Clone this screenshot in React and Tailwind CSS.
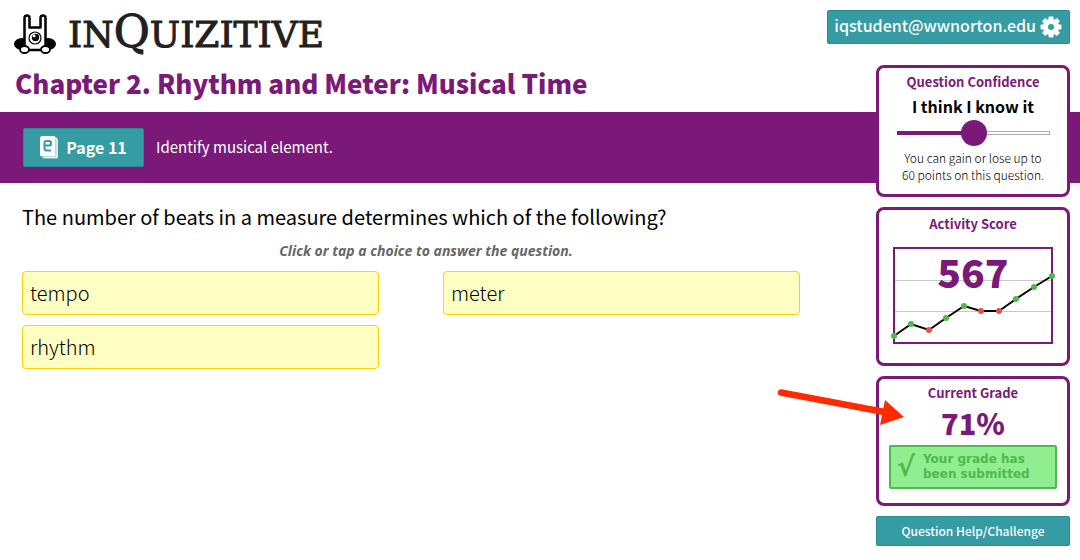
import { useState } from "react";

const choices = ["tempo", "meter", "rhythm"];

const scores = [
  { x: 8, y: 94, correct: true },
  { x: 25, y: 82, correct: true },
  { x: 43, y: 88, correct: false },
  { x: 60, y: 76, correct: true },
  { x: 78, y: 64, correct: true },
  { x: 95, y: 69, correct: false },
  { x: 113, y: 69, correct: false },
  { x: 130, y: 57, correct: true },
  { x: 148, y: 45, correct: true },
  { x: 166, y: 34, correct: true },
];

function RabbitLogo() {
  return (
    <svg width="42" height="40" viewBox="0 0 42 40" aria-hidden="true">
      <ellipse cx="8" cy="30" rx="8" ry="6" fill="#000" />
      <ellipse cx="34" cy="30" rx="8" ry="6" fill="#000" />
      <path
        d="M10.500 36V4q0-2.500 2.500-2.500t2.500 2.500v9.500h11V4q0-2.500 2.500-2.500t2.500 2.500V36z"
        fill="#fff"
        stroke="#000"
        strokeWidth="2.500"
        strokeLinejoin="round"
      />
      <circle cx="21" cy="24" r="6" fill="#fff" stroke="#000" strokeWidth="1.200" />
      <circle cx="21.500" cy="23.500" r="3.700" fill="#000" />
      <circle cx="20" cy="21.800" r="1.500" fill="#fff" />
      <ellipse cx="10.500" cy="35.500" rx="4.500" ry="3.500" fill="#fff" stroke="#000" strokeWidth="1.800" />
      <ellipse cx="31.500" cy="35.500" rx="4.500" ry="3.500" fill="#fff" stroke="#000" strokeWidth="1.800" />
    </svg>
  );
}

function GearIcon() {
  return (
    <svg width="22" height="22" viewBox="-11 -11 22 22" fill="#fff" aria-hidden="true">
      {[0, 45, 90, 135].map((angle) => (
        <rect key={angle} x="-2.500" y="-10.500" width="5" height="21" rx="1" transform={`rotate(${angle})`} />
      ))}
      <circle r="8" />
      <circle r="3" fill="#359ca3" />
    </svg>
  );
}

function EbookIcon() {
  return (
    <svg width="18" height="24" viewBox="0 0 18 24" aria-hidden="true">
      <path d="M2 1h14l2 2v19.500H3.500L1 20z" fill="#b5dcdf" />
      <path d="M14.500 1.500l2.500 2v18H4" fill="none" stroke="#fff" strokeWidth="0.800" />
      <path d="M1.500 0H15v20H0V1.500z" fill="#fff" />
      <path
        d="M4.500 9.500h5.500q1 0 1-1V7q0-2-2-2H6.500q-2 0-2 2v5.500q0 2 2 2H11"
        fill="none"
        stroke="#359ca3"
        strokeWidth="2"
      />
    </svg>
  );
}

function Card({ title, className, children }) {
  return (
    <section
      className={`relative rounded-lg border-3 border-[#7b1979] bg-white text-center ${className}`}
    >
      <h2 className="text-[13px] leading-5 font-bold text-[#7b1979]">{title}</h2>
      {children}
    </section>
  );
}

function ScoreChart() {
  return (
    <div className="relative mt-2">
      <svg viewBox="0 0 174 104" className="w-full" aria-hidden="true">
        <path d="M8 38.500h158M8 69.500h158" stroke="#c8c8c8" />
        <rect x="8" y="6" width="158" height="95" fill="none" stroke="#7b1979" strokeWidth="2" />
      </svg>
      <p className="absolute inset-x-0 top-0.5 text-[39px] leading-[54px] font-black text-[#7b1979]">567</p>
      <svg viewBox="0 0 174 104" className="absolute inset-0 w-full" aria-hidden="true">
        <polyline
          points={scores.map((s) => `${s.x},${s.y}`).join(" ")}
          fill="none"
          stroke="#000"
          strokeWidth="2"
        />
        {scores.map((s) => (
          <circle key={s.x} cx={s.x} cy={s.y} r="3" fill={s.correct ? "#4fb84f" : "#e0524b"} />
        ))}
      </svg>
    </div>
  );
}

function ConfidenceSlider() {
  const [value, setValue] = useState(51);

  return (
    <input
      type="range"
      aria-label="Question confidence"
      value={value}
      onChange={(e) => setValue(e.target.value)}
      style={{ "--fill": `${value}%` }}
      className="mx-auto block h-[26px] w-[153px] appearance-none bg-transparent [&::-webkit-slider-runnable-track]:h-1 [&::-webkit-slider-runnable-track]:bg-[linear-gradient(to_right,#7b1979_var(--fill),transparent_var(--fill)),linear-gradient(#fff,#fff)] [&::-webkit-slider-runnable-track]:bg-no-repeat [&::-webkit-slider-runnable-track]:[background-size:100%_100%,calc(100%-1px)_2px] [&::-webkit-slider-runnable-track]:[background-position:0_0,0_1px] [&::-webkit-slider-runnable-track]:bg-[#aaa] [&::-webkit-slider-thumb]:-mt-[11px] [&::-webkit-slider-thumb]:size-[26px] [&::-webkit-slider-thumb]:appearance-none [&::-webkit-slider-thumb]:rounded-full [&::-webkit-slider-thumb]:bg-[#7b1979]"
    />
  );
}

function Sidebar() {
  return (
    <aside className="z-10 col-start-2 row-start-2 row-span-3 mr-2.5 flex flex-col gap-2.5">
      <Card title="Question Confidence" className="h-[132px] pt-1">
        <p className="text-base leading-7 font-bold text-black">I think I know it</p>
        <ConfidenceSlider />
        <p className="mt-[3px] text-xs leading-[17px] font-light text-black">
          You can gain or lose up to
          <br />
          60 points on this question.
        </p>
      </Card>

      <Card title="Activity Score" className="h-[159px] px-[7px] pt-1">
        <ScoreChart />
      </Card>

      <Card title="Current Grade" className="h-[130px] px-2.5 pt-1">
        <p className="-mt-0.5 mb-0.5 text-[29px] leading-[42px] font-black text-[#7b1979]">71%</p>
        <div className="flex h-11 items-center gap-2 rounded-xs border-2 border-[#4fb84f] bg-[#90ee90] pl-1.5 text-left font-['DejaVu_Sans',sans-serif] font-bold text-[#4fb84f]">
          <span className="text-[27px]">√</span>
          <p className="text-xs leading-[15px]">
            Your grade has
            <br />
            been submitted
          </p>
        </div>
        <svg
          width="130"
          height="44"
          viewBox="0 0 130 44"
          className="absolute top-1.5 -left-[102px] max-w-none"
          aria-hidden="true"
        >
          <path d="M4 7.500L110 27.500" stroke="#ff2a00" strokeWidth="6.500" strokeLinecap="round" />
          <path d="M108 15l19 17-24 8z" fill="#ff2a00" />
        </svg>
      </Card>

      <button className="h-[30px] rounded-xs border border-[#2a8a8c] bg-[#359ca3] text-xs font-medium text-white">
        Question Help/Challenge
      </button>
    </aside>
  );
}

function App() {
  return (
    <div className="grid grid-cols-[1fr_204px] grid-rows-[65px_47px_71px_auto] bg-white font-['Noto_Sans_CJK_SC',sans-serif]">
      <header className="col-span-2 flex items-start justify-between pt-2.5 pr-2.5 pl-3.5">
        <div className="flex items-start gap-3 pt-1">
          <RabbitLogo />
          <p className="font-['DejaVu_Serif',serif] text-4xl leading-10 text-[#231f20] [-webkit-text-stroke:1px_#231f20]">
            IN<span className="text-[44px] leading-9">Q</span>UIZITIVE
          </p>
        </div>
        <button className="flex h-[34px] items-center gap-1 rounded-xs border border-[#2a8a8c] bg-[#359ca3] pr-[7px] pl-1.5 text-base leading-5 font-medium text-white">
          <span className="pb-1">iqstudent@wwnorton.edu</span>
          <GearIcon />
        </button>
      </header>

      <h1 className="col-start-1 row-start-2 pl-[15px] text-[26px] leading-9 font-black text-[#7b1979]">
        Chapter 2. Rhythm and Meter: Musical Time
      </h1>

      <div className="col-span-2 col-start-1 row-start-3 flex items-center gap-3 bg-[#7b1979] pl-[23px] text-white">
        <button className="flex h-[39px] w-[121px] items-center justify-center gap-2 rounded-xs border border-[#2a8a8c] bg-[#359ca3] text-base font-bold">
          <EbookIcon />
          <span className="pb-0.5">Page 11</span>
        </button>
        <p className="text-[15px]">Identify musical element.</p>
      </div>

      <main className="col-start-1 row-start-4 pt-5 pr-[46px] pl-[22px]">
        <p className="text-xl leading-7 text-black">
          The number of beats in a measure determines which of the following?
        </p>
        <p className="mt-2.5 text-center font-['Open_Sans',sans-serif] text-sm leading-5 font-bold text-[#666] italic">
          Click or tap a choice to answer the question.
        </p>
        <div className="mt-2.5 mr-[30px] grid grid-cols-2 gap-x-16 gap-y-2.5">
          {choices.map((choice) => (
            <button
              key={choice}
              className="h-11 rounded-sm border border-[#ffd200] bg-[#ffffc4] px-[7px] text-left text-xl font-light text-black"
            >
              {choice}
            </button>
          ))}
        </div>
      </main>

      <Sidebar />
    </div>
  );
}

export default App;
